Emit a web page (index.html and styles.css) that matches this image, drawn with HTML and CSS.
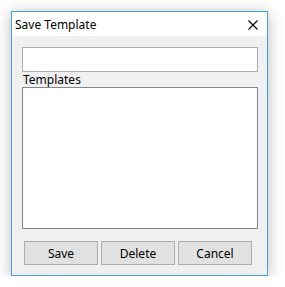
FILE: index.html
```html
<!DOCTYPE html>
<html lang="en">
<head>
  <meta charset="UTF-8" />
  <title>Save Template</title>
  <link rel="stylesheet" href="styles.css">
</head>
<body>
  <div class="window">
    <div class="titlebar">
      <span class="title">Save Template</span>
      <svg class="close" width="10" height="10" viewBox="0 0 10 10">
        <path d="M0.5 0.5 L9.5 9.5 M9.5 0.5 L0.5 9.5" stroke="#000" stroke-width="1.1" />
      </svg>
    </div>
    <div class="content">
      <input class="name-input" type="text">
      <label class="label">Templates</label>
      <div class="list"></div>
      <div class="buttons">
        <button class="btn">Save</button>
        <button class="btn">Delete</button>
        <button class="btn">Cancel</button>
      </div>
    </div>
  </div>
</body>
</html>
```

FILE: styles.css
```css
body {
  margin: 0;
  background: #fff;
  font-family: "Noto Sans", "Open Sans", sans-serif;
  font-size: 12px;
  color: #000;
}

.window {
  margin: 11px 0 0 11px;
  width: 255px;
  height: 263px;
  border: 1px solid #42a0e6;
  background: #f0f0f0;
  box-shadow: 0 2px 14px rgba(0, 0, 0, 0.28);
  display: flex;
  flex-direction: column;
}

.titlebar {
  height: 24px;
  background: #fff;
  display: flex;
  align-items: center;
  justify-content: space-between;
  padding: 0 9px 0 3px;
}

.title {
  font-size: 12px;
}

.close {
  display: block;
  margin-top: 1px;
}

.content {
  padding: 11px 9px 0 10px;
  display: flex;
  flex-direction: column;
}

.name-input {
  box-sizing: border-box;
  width: 236px;
  height: 25px;
  margin: 0;
  border: 1px solid #abadb3;
  background: #fff;
  outline: none;
}

.label {
  display: block;
  height: 15px;
  line-height: 15px;
  padding-left: 1px;
}

.list {
  box-sizing: border-box;
  width: 236px;
  height: 142px;
  border: 1px solid #828790;
  background: #fff;
}

.buttons {
  display: flex;
  gap: 3px;
  margin: 12px 0 0 2px;
}

.btn {
  box-sizing: border-box;
  width: 74px;
  height: 24px;
  margin: 0;
  padding: 0;
  border: 1px solid #adadad;
  background: #e1e1e1;
  font-family: inherit;
  font-size: 12px;
  color: #000;
}
```
